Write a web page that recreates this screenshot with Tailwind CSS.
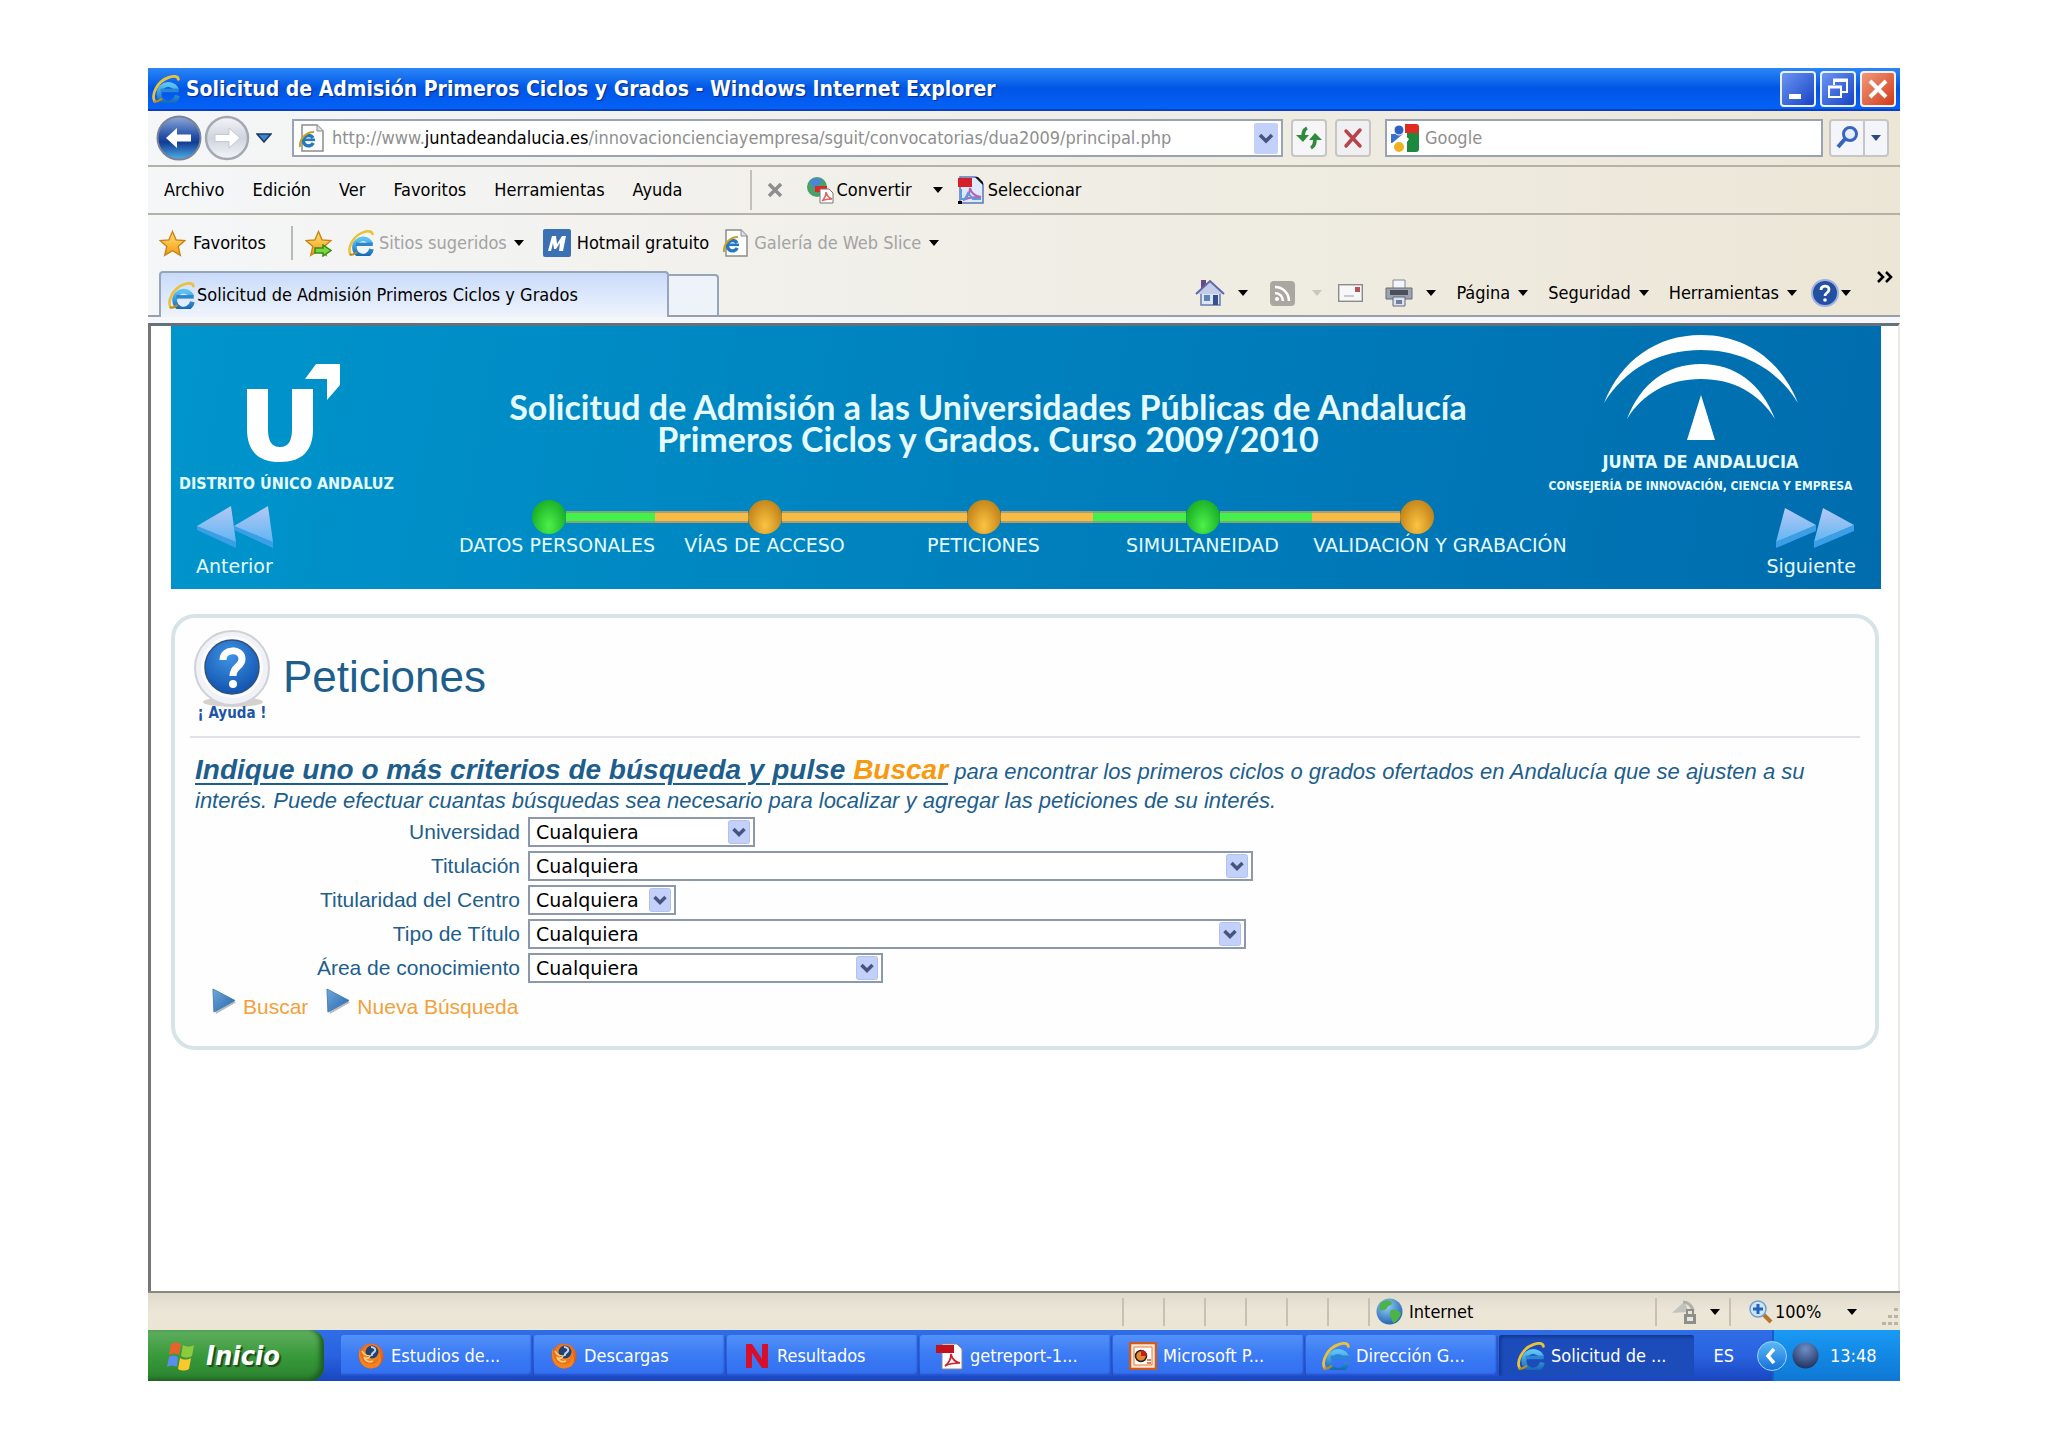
<!DOCTYPE html>
<html lang="es">
<head>
<meta charset="utf-8">
<meta name="viewport" content="width=device-width, initial-scale=1">
<title>Solicitud de Admisión Primeros Ciclos y Grados</title>
<script src="https://cdn.jsdelivr.net/npm/@tailwindcss/browser@4"></script>
</head>
<body class="min-h-screen flex flex-col bg-white px-[148px] pt-[68px] pb-[66px] font-['DejaVu_Sans_Condensed','DejaVu_Sans',sans-serif] text-[18px] leading-6 text-black">

<svg class="absolute size-0" aria-hidden="true">
  <defs>
    <linearGradient id="gIe" x1="0" y1="0" x2="0" y2="1"><stop offset="0" stop-color="#5ec3f2"/><stop offset="1" stop-color="#1467b8"/></linearGradient>
    <linearGradient id="gStar" x1="0" y1="0" x2="0" y2="1"><stop offset="0" stop-color="#ffe27a"/><stop offset="1" stop-color="#f39a12"/></linearGradient>
    <linearGradient id="gBack" x1="0" y1="0" x2="0" y2="1"><stop offset="0" stop-color="#8fa9d8"/><stop offset=".45" stop-color="#2752a8"/><stop offset=".6" stop-color="#123c94"/><stop offset="1" stop-color="#4fb0ea"/></linearGradient>
    <linearGradient id="gFwd" x1="0" y1="0" x2="0" y2="1"><stop offset="0" stop-color="#f4f5f8"/><stop offset=".5" stop-color="#cfd4de"/><stop offset="1" stop-color="#f3f5f8"/></linearGradient>
    <linearGradient id="gNav" x1="0" y1="0" x2="0" y2="1"><stop offset="0" stop-color="#b4c8f6"/><stop offset="1" stop-color="#62b6f2"/></linearGradient>
    <linearGradient id="gPlay" x1="0" y1="0" x2="1" y2="1"><stop offset="0" stop-color="#6fa8dc"/><stop offset="1" stop-color="#2465ab"/></linearGradient>
    <radialGradient id="gHelp" cx=".45" cy=".3" r=".8"><stop offset="0" stop-color="#3f93e4"/><stop offset="1" stop-color="#0a4aa6"/></radialGradient>
    <radialGradient id="gGlobe" cx=".4" cy=".3" r=".8"><stop offset="0" stop-color="#8fd0f5"/><stop offset="1" stop-color="#1b55a8"/></radialGradient>
    <radialGradient id="gFox" cx=".5" cy=".4" r=".6"><stop offset="0" stop-color="#ffb23c"/><stop offset="1" stop-color="#d9480f"/></radialGradient>
    <radialGradient id="gBall" cx=".5" cy=".25" r=".8"><stop offset="0" stop-color="#6f8fc8"/><stop offset="1" stop-color="#1c2c58"/></radialGradient>
  </defs>
  <symbol id="ie" viewBox="0 0 26 26">
    <path d="M23.500 19A8.600 8.600 0 1 1 22.900 14" fill="none" stroke="url(#gIe)" stroke-width="4.600"/>
    <path d="M8 12.600h16.800v3.400H8z" fill="#2b86d4"/>
    <path d="M2.500 24.500C-1 18 5 6 15 2.400C20 .5 24 1 24.500 4" fill="none" stroke="#e9c23c" stroke-width="2.600" stroke-linecap="round"/>
    <path d="M2.500 24.500c2 1 4-.5 6-2" fill="none" stroke="#b98d1c" stroke-width="2" stroke-linecap="round"/>
  </symbol>
  <symbol id="iepage" viewBox="0 0 26 28">
    <path d="M4 1h15l6 6v20H4z" fill="#fdfdfd" stroke="#8c8c8c" stroke-width="1.500"/>
    <path d="M19 1v6h6" fill="#ddd" stroke="#8c8c8c"/>
    <path d="M15.200 19A5.200 5.200 0 1 1 15 14" fill="none" stroke="#2677bd" stroke-width="3.400"/>
    <path d="M6 14.500h11v2.600H6z" fill="#2677bd"/>
    <path d="M2 23C1 16 7 8 16 8" fill="none" stroke="#c9a227" stroke-width="2"/>
  </symbol>
  <symbol id="star" viewBox="0 0 26 26">
    <path d="M13 1.500l3.400 8 8.600.7-6.500 5.700 2 8.500L13 19.900l-7.500 4.500 2-8.500L1 10.200l8.600-.7z" fill="url(#gStar)" stroke="#c98212" stroke-width="1.300"/>
  </symbol>
  <symbol id="drop" viewBox="0 0 10 6"><path d="M0 0h10L5 6z" fill="currentColor"/></symbol>
  <symbol id="fox" viewBox="0 0 28 28">
    <circle cx="14" cy="14" r="12.500" fill="url(#gFox)"/>
    <circle cx="15" cy="10" r="6.500" fill="#24406f"/>
    <path d="M14 5c3 0 5 2 4 4s-4 2-3 5" fill="none" stroke="#b9d6f2" stroke-width="2"/>
    <path d="M3 6c0 10 3 16 11 16 7 0 9-6 7-11 5 4 5 15-7 15.500C4 26 0 16 3 6z" fill="#f58220"/>
    <path d="M5 9c2 4 5 5 8 5-1 3-5 3-6 1 1 4 5 6 9 4" fill="none" stroke="#ffd27a" stroke-width="1.600"/>
  </symbol>
  <symbol id="play" viewBox="0 0 26 28"><path d="M3 4l22 11L4 27z" fill="#b7bcc4"/><path d="M1 1l23 12L2 25z" fill="url(#gPlay)" stroke="#4d7fae"/></symbol>
  <symbol id="chev" viewBox="0 0 22 24">
    <rect x=".5" y=".5" width="21" height="23" rx="2" fill="#c3d1fa" stroke="#b0c2f2"/>
    <path d="M5.500 9l5.500 5.500L16.500 9" fill="none" stroke="#44567f" stroke-width="3.500"/>
  </symbol>
</svg>

<!-- Title bar -->
<header class="flex h-[43px] items-center gap-[6px] bg-linear-to-b from-[#2b86f8] via-[#0055e5] to-[#0562f8] pl-1 pr-1 border-b-2 border-[#0a3fc0]">
  <svg class="size-[28px] shrink-0"><use href="#ie"/></svg>
  <h1 class="flex-1 truncate text-[21px] font-bold text-white [text-shadow:1px_1px_1px_#0a2a80]">Solicitud de Admisión Primeros Ciclos y Grados - Windows Internet Explorer</h1>
  <div class="flex gap-1">
    <button aria-label="Minimizar" class="size-[36px] rounded-[4px] border-2 border-white/90 bg-linear-to-br from-[#6c94f0] to-[#1941c6]"><svg viewBox="0 0 32 32"><path d="M7 21h12v5H7z" fill="#fff"/></svg></button>
    <button aria-label="Restaurar" class="size-[36px] rounded-[4px] border-2 border-white/90 bg-linear-to-br from-[#6c94f0] to-[#1941c6]"><svg viewBox="0 0 32 32" fill="none" stroke="#fff" stroke-width="2"><path d="M12 12V8h13v11h-5"/><path d="M11 7h15" stroke-width="3"/><path d="M7 14h12v10H7z"/><path d="M6 14h14" stroke-width="3"/></svg></button>
    <button aria-label="Cerrar" class="size-[36px] rounded-[4px] border-2 border-white/90 bg-linear-to-br from-[#f09878] to-[#cf3510]"><svg viewBox="0 0 32 32"><path d="M8 8l16 16M24 8L8 24" stroke="#fff" stroke-width="4"/></svg></button>
  </div>
</header>

<!-- Toolbars -->
<div class="bg-linear-to-r from-[#f5f6f8] via-[#f0eee6] to-[#ece6d6]">
  <div class="flex h-[56px] items-center border-b-2 border-[#b3b1a8] pl-2 pr-[11px]">
    <button aria-label="Atrás"><svg class="h-[46px] w-[46px]" viewBox="0 0 46 46"><circle cx="23" cy="23" r="21.500" fill="url(#gBack)" stroke="#7b8296" stroke-width="2"/><path d="M10 23l11-10v6.500h14v7H21V33z" fill="#fff"/></svg></button>
    <button aria-label="Adelante" class="ml-[2px]"><svg class="h-[46px] w-[46px]" viewBox="0 0 46 46"><circle cx="23" cy="23" r="21" fill="url(#gFwd)" stroke="#a4a8b2" stroke-width="2.500"/><path d="M36 23L25 13v6.500H11v7h14V33z" fill="#fff" stroke="#c5c9d2"/></svg></button>
    <button aria-label="Páginas recientes" class="ml-[4px] w-[20px]"><svg class="mx-auto h-[10px] w-[16px]" viewBox="0 0 16 10"><path d="M1 1h14L8 9z" fill="#3f86c8" stroke="#17396b" stroke-width="1.500"/></svg></button>
    <div class="ml-[18px] flex h-[38px] flex-1 items-center border-2 border-[#9aa3b5] bg-white pl-1 pr-[3px]">
      <svg class="h-[28px] w-[26px] shrink-0"><use href="#iepage"/></svg>
      <div role="textbox" aria-label="Dirección" contenteditable="true" class="ml-[8px] flex-1 truncate text-[#8f8f8f]">http://www.<span class="text-black">juntadeandalucia.es</span>/innovacioncienciayempresa/sguit/convocatorias/dua2009/principal.php</div>
      <button aria-label="Mostrar direcciones"><svg class="h-[31px] w-[24px]" viewBox="0 0 24 31"><rect width="24" height="31" rx="2" fill="#c3d1fa"/><path d="M6 12l6 6 6-6" fill="none" stroke="#44567f" stroke-width="3.500"/></svg></button>
    </div>
    <button aria-label="Actualizar" class="ml-[8px] h-[38px] w-[36px] rounded-[4px] border-2 border-[#c6c6c4] bg-[#f6f6f8]"><svg viewBox="0 0 32 34" fill="none" stroke="#2e8b3d" stroke-width="3.500"><path d="M14 7c-4 2-4 6-4 10"/><path d="M3 14h13l-6 7z" fill="#2e8b3d" stroke="none"/><path d="M18 27c4-2 4-6 4-10"/><path d="M16 19h13l-7-7z" fill="#2e8b3d" stroke="none"/></svg></button>
    <button aria-label="Detener" class="ml-[8px] h-[38px] w-[36px] rounded-[4px] border-2 border-[#c6c6c4] bg-[#f0f0f2]"><svg viewBox="0 0 32 34"><path d="M9 10l14 15M23 9L9 25" stroke="#b5444b" stroke-width="3.500" stroke-linecap="round"/></svg></button>
    <div class="ml-[14px] flex h-[38px] w-[438px] items-center border-2 border-[#9aa3b5] bg-white pl-1">
      <svg class="h-[28px] w-[28px] shrink-0" viewBox="0 0 28 28"><path d="M14 0h11a3 3 0 013 3v6H14z" fill="#e02b20"/><path d="M16 9h12v16a3 3 0 01-3 3H16z" fill="#1c8a3e"/><path d="M0 10h12v9H0z" fill="#3b6fd0"/><circle cx="8" cy="6" r="5" fill="#2d62bf" stroke="#fff"/><path d="M0 20l12-10 6 5-4 6z" fill="#fff"/><circle cx="8" cy="23" r="5" fill="#f1b022"/></svg>
      <input aria-label="Buscar" placeholder="Google" class="ml-[6px] w-full bg-transparent outline-none placeholder:text-[#8f8f8f]">
    </div>
    <div class="ml-[6px] flex h-[38px] rounded-[4px] border-2 border-[#c6c6c4] bg-[#f4f5fa]">
      <button aria-label="Ir" class="w-[34px] border-r-2 border-[#c6c6c4]"><svg viewBox="0 0 32 34" fill="none"><circle cx="19" cy="13" r="6.500" stroke="#3a63c0" stroke-width="3" fill="#e4eefc"/><path d="M14 18l-7 8" stroke="#3a63c0" stroke-width="4"/></svg></button>
      <button aria-label="Opciones de búsqueda" class="w-[22px] text-[#2c4a82]"><svg class="mx-auto h-[6px] w-[10px]"><use href="#drop"/></svg></button>
    </div>
  </div>

  <nav class="flex h-[48px] items-center border-b-2 border-[#b3b1a8] pl-4">
    <div class="flex gap-[28px]">
      <a href="#">Archivo</a><a href="#">Edición</a><a href="#">Ver</a><a href="#">Favoritos</a><a href="#">Herramientas</a><a href="#">Ayuda</a>
    </div>
    <div class="ml-[67px] h-[40px] w-[2px] bg-[#c2c0b8]"></div>
    <button aria-label="Cerrar barra" class="ml-[14px]"><svg class="size-[18px]" viewBox="0 0 18 18"><path d="M3 3l12 12M15 3L3 15" stroke="#8e8e8e" stroke-width="3.500"/></svg></button>
    <button class="ml-[22px] flex items-center gap-[3px]"><svg class="size-[28px]" viewBox="0 0 28 28"><circle cx="11" cy="11" r="10" fill="#4aa06a"/><path d="M4 5c4-4 10-3 13 0-3 3-5 2-6 6-3 2-6-1-7-6z" fill="#4b86d8"/><path d="M9 10h12v6H9z" fill="#e02626"/><path d="M14 13h9l4 4v10H14z" fill="#fff" stroke="#777"/><path d="M16 25c3-3 4-6 4-9 1 4 3 6 6 7-4 0-7 0-10 2z" fill="none" stroke="#d66" stroke-width="1.500"/></svg>Convertir</button>
    <button aria-label="Opciones de Convertir" class="ml-[21px]"><svg class="h-[6px] w-[10px]"><use href="#drop"/></svg></button>
    <button class="ml-[14px] flex items-center gap-[3px]"><svg class="size-[28px]" viewBox="0 0 28 28"><path d="M3 1h16l7 7v19H3z" fill="#dfe9fb" stroke="#5b78b8" stroke-width="1.500"/><path d="M18 1l8 8v-3l-5-5z" fill="#111"/><path d="M1 2h14v9H1z" fill="#d5202a"/><path d="M6 24c5-3 7-7 7-12 1 5 5 8 11 9-6 0-12 0-18 3z" fill="none" stroke="#b565b5" stroke-width="2"/><path d="M4 13v10h4l3-6 5 6h8" fill="none" stroke="#5b9be0" stroke-width="2"/><path d="M1 25h4v3H1z"/></svg>Seleccionar</button>
  </nav>

  <nav class="flex h-[56px] items-center pl-[11px]">
    <button class="flex items-center gap-[7px]"><svg class="size-[27px]"><use href="#star"/></svg>Favoritos</button>
    <div class="ml-[25px] h-[34px] w-[2px] bg-[#b9b9b5]"></div>
    <button aria-label="Agregar a favoritos" class="relative ml-[12px]"><svg class="size-[27px]"><use href="#star"/></svg><svg class="absolute right-0 bottom-0 h-[13px] w-[18px]" viewBox="0 0 18 13"><path d="M1 4h8V1l8 5.500-8 5.500V9H1z" fill="#7fd63c" stroke="#2f8f1c" stroke-width="1.500"/></svg></button>
    <a href="#" class="ml-[16px] flex items-center gap-[5px] text-[#a3a3a3]"><svg class="size-[26px]"><use href="#ie"/></svg>Sitios sugeridos<svg class="ml-[2px] h-[6px] w-[10px] text-black"><use href="#drop"/></svg></a>
    <a href="#" class="ml-[19px] flex items-center gap-[6px]"><svg class="size-[28px]" viewBox="0 0 28 28"><rect width="28" height="28" rx="2" fill="#3c70b4"/><path d="M5 22L9 7h4l1 8 5-8h4l-3 15h-4l1-8-4 6h-2l-1-6-2 8z" fill="#fff"/></svg>Hotmail gratuito</a>
    <a href="#" class="ml-[13px] flex items-center gap-[6px] text-[#a3a3a3]"><svg class="h-[28px] w-[26px]"><use href="#iepage"/></svg>Galería de Web Slice<svg class="ml-[2px] h-[6px] w-[10px] text-black"><use href="#drop"/></svg></a>
  </nav>

  <div class="flex h-[46px] items-end border-b-2 border-[#9a9eaa] pl-[11px]">
    <a href="#" class="-mb-[2px] flex h-[46px] w-[510px] items-center gap-[2px] rounded-t-[4px] border-2 border-b-0 border-[#97a5b8] bg-linear-to-b from-[#c9dbfa] to-[#eff4fc] px-[7px]"><svg class="size-[27px] shrink-0"><use href="#ie"/></svg><span class="truncate">Solicitud de Admisión Primeros Ciclos y Grados</span></a>
    <button aria-label="Nueva pestaña" class="h-[41px] w-[50px] rounded-tr-[4px] border-2 border-b-0 border-l-0 border-[#97a5b8] bg-[#eef3fa]"></button>
    <div class="ml-auto flex h-full items-center self-start pr-[7px]">
      <button aria-label="Página principal"><svg class="h-[30px] w-[30px]" viewBox="0 0 30 30"><path d="M6 2h5v8H6z" fill="#6a4a86"/><path d="M6 14h19v13H6z" fill="#dbe6f8" stroke="#6b7ba8" stroke-width="1.500"/><path d="M1 16L15 3l14 13" fill="#c3cdea" stroke="#5d6aa6" stroke-width="2"/><path d="M9 17h6v6H9z" fill="#5f83b8"/><path d="M18 17h5v10h-5z" fill="#35508c"/></svg></button>
      <svg class="ml-[13px] h-[6px] w-[10px]"><use href="#drop"/></svg>
      <button aria-label="Fuentes" class="ml-[22px]"><svg class="size-[25px]" viewBox="0 0 25 25"><rect width="25" height="25" rx="4" fill="#a9a79f"/><g fill="none" stroke="#fff" stroke-width="2.500"><path d="M5 12a8 8 0 018 8M5 6a14 14 0 0114 14"/></g><circle cx="7" cy="18" r="2" fill="#fff"/></svg></button>
      <svg class="ml-[17px] h-[6px] w-[10px] text-[#c9c6bc]"><use href="#drop"/></svg>
      <button aria-label="Leer correo" class="ml-[16px]"><svg class="h-[18px] w-[25px]" viewBox="0 0 25 18"><rect x=".7" y=".7" width="23.600" height="16.600" fill="#f7f7f7" stroke="#8b8b8b" stroke-width="1.400"/><path d="M17 3h5v5h-5z" fill="#b4545a"/><path d="M6 12h10" stroke="#bbb" stroke-width="1.500"/></svg></button>
      <button aria-label="Imprimir" class="ml-[21px]"><svg class="h-[28px] w-[30px]" viewBox="0 0 30 28"><path d="M9 1h12v9H9z" fill="#f2f5fa" stroke="#889"/><path d="M2 9h26v11H2z" fill="#9ea4ae" stroke="#666c78"/><path d="M6 11h18v5H6z" fill="#4b505c"/><path d="M9 18h12v9H9z" fill="#dde3ee" stroke="#667"/><path d="M12 21h6v4h-6z" fill="#6f7fa0"/></svg></button>
      <svg class="ml-[12px] h-[6px] w-[10px]"><use href="#drop"/></svg>
      <button class="ml-[20px] flex items-center gap-[8px]">Página<svg class="h-[6px] w-[10px]"><use href="#drop"/></svg></button>
      <button class="ml-[20px] flex items-center gap-[8px]">Seguridad<svg class="h-[6px] w-[10px]"><use href="#drop"/></svg></button>
      <button class="ml-[20px] flex items-center gap-[8px]">Herramientas<svg class="h-[6px] w-[10px]"><use href="#drop"/></svg></button>
      <button aria-label="Ayuda" class="ml-[14px] flex items-center gap-[2px]"><svg class="size-[28px]" viewBox="0 0 28 28"><circle cx="14" cy="14" r="13" fill="#2450a4" stroke="#9fb2dc" stroke-width="2"/><path d="M10 11c0-5 8-5 8-.5 0 3.500-4 3-4 6.500" fill="none" stroke="#fff" stroke-width="2.800"/><circle cx="14" cy="21" r="1.800" fill="#fff"/></svg><svg class="h-[6px] w-[10px]"><use href="#drop"/></svg></button>
      <button aria-label="Más" class="ml-[26px] self-start"><svg class="h-[12px] w-[16px]" viewBox="0 0 16 12"><path d="M1 1l5 5-5 5M9 1l5 5-5 5" fill="none" stroke="#000" stroke-width="2.600"/></svg></button>
    </div>
  </div>
  <div class="h-[6px] bg-[#f6f7fa]"></div>
</div>

<!-- Web page -->
<main class="flex-1 border-t-3 border-l-3 border-r-2 border-t-[#64707a] border-l-[#77757a] border-r-[#ece9e4] bg-white pl-5 pr-[17px]">
  <div class="flex h-[263px] flex-col bg-linear-[100deg] from-[#0095cc] via-[#0080bd] to-[#006cae] text-[#e6fbff]">
    <div class="flex h-[175px]">
      <div class="flex w-[285px] flex-col items-start">
        <svg class="mt-[38px] ml-[76px] h-[99px] w-[93px]" viewBox="0 0 93 99" fill="#fff"><path d="M0 25h21v40c0 11 3 18 12 18s12-7 12-18V25h21v40c0 22-11 33-33 33S0 87 0 65z"/><path d="M69 0h24v21L80 36V15H58z"/></svg>
        <p class="ml-2 mt-[9px] text-[16px] font-bold">DISTRITO ÚNICO ANDALUZ</p>
      </div>
      <h2 class="flex-1 pt-[65px] text-center font-['Lato',sans-serif] text-[34px] leading-8 font-bold whitespace-nowrap">Solicitud de Admisión a las Universidades Públicas de Andalucía<br>Primeros Ciclos y Grados. Curso 2009/2010</h2>
      <div class="flex w-[361px] flex-col items-center">
        <svg class="mt-[9px] h-[106px] w-[196px]" viewBox="0 0 196 106" fill="#fff"><path d="M1 68C18 25 54 0 98 0s80 25 97 68C174 34 140 15 98 15S22 34 1 68z"/><path d="M24 84C38 48 64 29 98 29s60 19 74 55C156 58 130 44 98 44S40 58 24 84z"/><path d="M98 60l14 45H84z"/></svg>
        <p class="mt-[9px] text-[18px] leading-6 font-bold">JUNTA DE ANDALUCIA</p>
        <p class="text-[12px] leading-6 font-bold">CONSEJERÍA DE INNOVACIÓN, CIENCIA Y EMPRESA</p>
      </div>
    </div>
    <div class="flex flex-1 font-['DejaVu_Sans',sans-serif] text-[19px] leading-6">
      <div class="w-[269px] pl-[25px]">
        <a href="#" class="inline-flex flex-col"><svg class="mt-[4px] h-[44px] w-[82px]" viewBox="0 0 82 44"><g id="rw"><path d="M1 21l39 16v6L1 25z" fill="#3a9fe6"/><path d="M1 21L35 1l5 36z" fill="url(#gNav)"/></g><use href="#rw" x="37"/></svg><span class="mt-[5px]">Anterior</span></a>
      </div>
      <ol class="grid grid-cols-[215px_219px_219px_219px_256px] whitespace-nowrap">
        <li class="flex flex-col">
          <div class="flex h-[32px] items-center"><span class="w-[92px]"></span><span class="size-[34px] rounded-full bg-radial-[at_50%_75%] from-[#4df04a] to-[#0a9a1c]"></span><span class="h-[12px] flex-1 border-y-2 border-[#7ea876] bg-[#45f04a]"></span></div>
          <span class="text-right">DATOS PERSONALES</span>
        </li>
        <li class="flex flex-col">
          <div class="flex h-[32px] items-center"><span class="h-[12px] flex-1 border-y-2 border-[#b79a6c] bg-[#f4bd48]"></span><span class="size-[34px] rounded-full bg-radial-[at_50%_75%] from-[#fcc343] to-[#b0700c]"></span><span class="h-[12px] flex-1 border-y-2 border-[#b79a6c] bg-[#f4bd48]"></span></div>
          <span class="text-center">VÍAS DE ACCESO</span>
        </li>
        <li class="flex flex-col">
          <div class="flex h-[32px] items-center"><span class="h-[12px] flex-1 border-y-2 border-[#b79a6c] bg-[#f4bd48]"></span><span class="size-[34px] rounded-full bg-radial-[at_50%_75%] from-[#fcc343] to-[#b0700c]"></span><span class="h-[12px] flex-1 border-y-2 border-[#b79a6c] bg-[#f4bd48]"></span></div>
          <span class="text-center">PETICIONES</span>
        </li>
        <li class="flex flex-col">
          <div class="flex h-[32px] items-center"><span class="h-[12px] flex-1 border-y-2 border-[#7ea876] bg-[#45f04a]"></span><span class="size-[34px] rounded-full bg-radial-[at_50%_75%] from-[#4df04a] to-[#0a9a1c]"></span><span class="h-[12px] flex-1 border-y-2 border-[#7ea876] bg-[#45f04a]"></span></div>
          <span class="text-center">SIMULTANEIDAD</span>
        </li>
        <li class="flex flex-col">
          <div class="flex h-[32px] items-center"><span class="h-[12px] w-[88px] border-y-2 border-[#b79a6c] bg-[#f4bd48]"></span><span class="size-[34px] rounded-full bg-radial-[at_50%_75%] from-[#fcc343] to-[#b0700c]"></span></div>
          <span class="text-center">VALIDACIÓN Y GRABACIÓN</span>
        </li>
      </ol>
      <div class="ml-auto pr-[25px]">
        <a href="#" class="inline-flex flex-col items-end"><svg class="mt-[6px] h-[42px] w-[81px]" viewBox="0 0 81 42"><g id="ff"><path d="M1 35l40-17v6L1 41z" fill="#3a9fe6"/><path d="M41 18L10 1 1 35z" fill="url(#gNav)"/></g><use href="#ff" x="38"/></svg><span class="mt-[5px]">Siguiente</span></a>
      </div>
    </div>
  </div>

  <section class="mt-[25px] mr-[2px] rounded-[24px] border-4 border-[#d6e4e8] bg-[#fefefe] px-[15px] text-[#1d5e8d] font-['Liberation_Sans',sans-serif]">
    <div class="flex h-[120px] border-b-2 border-[#dfe3e9] pt-[12px]">
      <a href="#" class="flex w-[84px] flex-col items-center"><svg class="size-[78px] shrink-0" viewBox="0 0 78 78"><ellipse cx="40" cy="72" rx="30" ry="5" fill="#d6d0cc"/><circle cx="39" cy="38" r="37" fill="#f1f2f6" stroke="#cfd1d8" stroke-width="2"/><circle cx="39" cy="37" r="31" fill="#fafbfd"/><circle cx="39" cy="37" r="27" fill="url(#gHelp)" stroke="#33507e" stroke-width="1.500"/><path d="M30 30c0-12 19-12 19-1 0 8-9 7-9 17" fill="none" stroke="#fff" stroke-width="7"/><circle cx="40" cy="54" r="4" fill="#fff"/></svg><span class="-mt-[5px] font-['DejaVu_Sans_Condensed',sans-serif] text-[15px] leading-5 font-bold text-[#1c55a4]">¡ Ayuda !</span></a>
      <h3 class="ml-[9px] pt-[21px] text-[44px] leading-[52px]">Peticiones</h3>
    </div>
    <p class="mt-[17px] pl-[5px] text-[22px] leading-[29px] italic"><strong class="text-[28px] underline decoration-2 underline-offset-4">Indique uno o más criterios de búsqueda y pulse <span class="text-[#f79a10]">Buscar</span></strong> para encontrar los primeros ciclos o grados ofertados en Andalucía que se ajusten a su interés. Puede efectuar cuantas búsquedas sea necesario para localizar y agregar las peticiones de su interés.</p>
    <form class="mt-[2px] pb-[24px]">
      <div class="grid grid-cols-[330px_1fr] items-center gap-x-[8px] gap-y-1 text-right text-[21px] leading-[30px]">
        <label for="uni">Universidad</label>
        <div class="relative w-[227px]"><select id="uni" class="block h-[30px] w-full appearance-none border-2 border-[#8d99ab] bg-white pl-[6px] font-['DejaVu_Sans',sans-serif] text-[19px] leading-6 text-black"><option>Cualquiera</option></select><svg class="pointer-events-none absolute top-[3px] right-[4px] h-[24px] w-[24px]"><use href="#chev"/></svg></div>
        <label for="tit">Titulación</label>
        <div class="relative w-[725px]"><select id="tit" class="block h-[30px] w-full appearance-none border-2 border-[#8d99ab] bg-white pl-[6px] font-['DejaVu_Sans',sans-serif] text-[19px] leading-6 text-black"><option>Cualquiera</option></select><svg class="pointer-events-none absolute top-[3px] right-[4px] h-[24px] w-[24px]"><use href="#chev"/></svg></div>
        <label for="cen">Titularidad del Centro</label>
        <div class="relative w-[148px]"><select id="cen" class="block h-[30px] w-full appearance-none border-2 border-[#8d99ab] bg-white pl-[6px] font-['DejaVu_Sans',sans-serif] text-[19px] leading-6 text-black"><option>Cualquiera</option></select><svg class="pointer-events-none absolute top-[3px] right-[4px] h-[24px] w-[24px]"><use href="#chev"/></svg></div>
        <label for="tipo">Tipo de Título</label>
        <div class="relative w-[718px]"><select id="tipo" class="block h-[30px] w-full appearance-none border-2 border-[#8d99ab] bg-white pl-[6px] font-['DejaVu_Sans',sans-serif] text-[19px] leading-6 text-black"><option>Cualquiera</option></select><svg class="pointer-events-none absolute top-[3px] right-[4px] h-[24px] w-[24px]"><use href="#chev"/></svg></div>
        <label for="area">Área de conocimiento</label>
        <div class="relative w-[355px]"><select id="area" class="block h-[30px] w-full appearance-none border-2 border-[#8d99ab] bg-white pl-[6px] font-['DejaVu_Sans',sans-serif] text-[19px] leading-6 text-black"><option>Cualquiera</option></select><svg class="pointer-events-none absolute top-[3px] right-[4px] h-[24px] w-[24px]"><use href="#chev"/></svg></div>
      </div>
      <div class="mt-[5px] flex gap-[18px] pl-[22px] text-[21px] leading-[30px] text-[#f2a13a]">
        <button type="submit" class="flex gap-[6px]"><svg class="h-[27px] w-[25px]"><use href="#play"/></svg><span class="pt-[4px]">Buscar</span></button>
        <button type="reset" class="flex gap-[6px]"><svg class="h-[27px] w-[25px]"><use href="#play"/></svg><span class="pt-[4px]">Nueva Búsqueda</span></button>
      </div>
    </form>
  </section>
</main>

<!-- Status bar -->
<div class="flex h-[39px] items-center border-t-2 border-[#8a887e] bg-linear-to-b from-[#dedacb] via-[#ece6d8] to-[#ebe5d4]">
  <div class="ml-auto flex h-[28px]">
    <span class="w-[41px] border-l-2 border-[#c5c2b4]"></span><span class="w-[41px] border-l-2 border-[#c5c2b4]"></span><span class="w-[41px] border-l-2 border-[#c5c2b4]"></span><span class="w-[41px] border-l-2 border-[#c5c2b4]"></span><span class="w-[41px] border-l-2 border-[#c5c2b4]"></span><span class="w-[41px] border-l-2 border-[#c5c2b4]"></span>
    <div class="flex w-[287px] items-center gap-[6px] border-l-2 border-[#c5c2b4] pl-[6px]"><svg class="size-[27px]" viewBox="0 0 27 27"><circle cx="13.500" cy="13.500" r="13" fill="url(#gGlobe)"/><path d="M5 5c5-4 9-3 11 0-1 3-4 2-5 5-2 3-6 3-8 1 0-2 1-4 2-6zM15 12c4-1 8 0 10 3-1 5-4 9-8 10-1-4-5-8-2-13z" fill="#4db24a"/></svg>Internet</div>
    <div class="flex w-[74px] items-center gap-[12px] border-l-2 border-[#c5c2b4] pl-[14px]"><svg class="h-[26px] w-[27px]" viewBox="0 0 27 26"><path d="M1 14L14 2l3 11z" fill="#c3c3bd"/><path d="M12 3a10 10 0 0110 9" fill="none" stroke="#b0b0aa" stroke-width="3"/><path d="M13 15h12v10H13z" fill="#8f8f8a"/><path d="M16 15v-4h6v4" fill="none" stroke="#8f8f8a" stroke-width="2"/><path d="M16 18h6v4h-6z" fill="#e8e8e2"/></svg><svg class="h-[6px] w-[10px]"><use href="#drop"/></svg></div>
    <button class="flex w-[171px] items-center border-l-2 border-[#c5c2b4] pl-[18px]"><svg class="h-[24px] w-[24px]" viewBox="0 0 24 24"><path d="M14 14l8 8" stroke="#b7742c" stroke-width="4"/><circle cx="9" cy="9" r="8" fill="#cfe4fa" stroke="#6f9fd0" stroke-width="1.500"/><path d="M9 4v10M4 9h10" stroke="#1f62c0" stroke-width="3"/></svg><span class="ml-[2px]">100%</span><svg class="ml-[26px] h-[6px] w-[10px]"><use href="#drop"/></svg><svg class="ml-auto h-[20px] w-[18px] self-end" viewBox="0 0 18 20" fill="#b9b5a4"><path d="M12 2h4v3h-4zM12 9h4v3h-4zM6 9h4v3H6zM12 16h4v3h-4zM6 16h4v3H6zM0 16h4v3H0z"/></svg></button>
  </div>
</div>

<!-- Taskbar -->
<footer class="flex h-[51px] items-stretch bg-linear-to-b from-[#2f6ee6] via-[#2a62e0] to-[#1a46c0] text-white">
  <button class="flex w-[176px] shrink-0 items-center gap-[9px] rounded-r-[14px] bg-linear-to-b from-[#5fae5f] via-[#389a3a] to-[#2c8230] pl-[18px] shadow-[inset_-4px_-2px_5px_#1c5c22]"><svg class="h-[30px] w-[31px]" viewBox="0 0 31 30"><path d="M5 3c3-2 6-2 10 0l-2 11c-4-2-7-2-10 0z" fill="#e8622c"/><path d="M17 4c4 2 7 2 11 0l-2 11c-4 2-7 2-11 0z" fill="#8ccb3c"/><path d="M3 16c3-2 6-2 9 0l-1 10c-4-2-7-2-10 0z" fill="#5b8df0"/><path d="M14 17c4 2 7 2 11 0l-2 11c-4 2-7 2-11 0z" fill="#f8c82c"/></svg><span class="text-[27px] leading-8 font-bold italic [text-shadow:2px_2px_1px_#1c4c1c]">Inicio</span></button>
  <div class="ml-[17px] flex gap-px py-[5px]">
    <button class="flex w-[192px] items-center gap-[6px] rounded-[3px] bg-linear-to-b from-[#5290f8] via-[#3a7af4] to-[#336ff0] pl-[16px] shadow-[inset_-2px_-2px_2px_#2450c8]"><svg class="size-[28px]"><use href="#fox"/></svg>Estudios de...</button>
    <button class="flex w-[192px] items-center gap-[6px] rounded-[3px] bg-linear-to-b from-[#5290f8] via-[#3a7af4] to-[#336ff0] pl-[16px] shadow-[inset_-2px_-2px_2px_#2450c8]"><svg class="size-[28px]"><use href="#fox"/></svg>Descargas</button>
    <button class="flex w-[192px] items-center gap-[6px] rounded-[3px] bg-linear-to-b from-[#5290f8] via-[#3a7af4] to-[#336ff0] pl-[16px] shadow-[inset_-2px_-2px_2px_#2450c8]"><svg class="size-[28px]" viewBox="0 0 28 28"><path d="M3 2h6l10 15V2h6v24h-6L9 11v15H3z" fill="#d80f2c"/></svg>Resultados</button>
    <button class="flex w-[192px] items-center gap-[6px] rounded-[3px] bg-linear-to-b from-[#5290f8] via-[#3a7af4] to-[#336ff0] pl-[16px] shadow-[inset_-2px_-2px_2px_#2450c8]"><svg class="size-[28px]" viewBox="0 0 28 28"><path d="M6 2h15l5 5v20H6z" fill="#fff" stroke="#888"/><path d="M0 3h18v8H0z" fill="#c4121c"/><path d="M9 24c4-3 6-7 6-12 1 5 4 8 9 9-5 0-10 0-15 3z" fill="none" stroke="#d0202a" stroke-width="1.700"/></svg>getreport-1...</button>
    <button class="flex w-[192px] items-center gap-[6px] rounded-[3px] bg-linear-to-b from-[#5290f8] via-[#3a7af4] to-[#336ff0] pl-[16px] shadow-[inset_-2px_-2px_2px_#2450c8]"><svg class="size-[28px]" viewBox="0 0 28 28"><path d="M1 1h26v26H1z" fill="#fbe6d4" stroke="#d2591c" stroke-width="2.500"/><path d="M5 5h18v18H5z" fill="#fff" stroke="#e07a3c"/><circle cx="12" cy="14" r="5.500" fill="#e8862e" stroke="#222" stroke-width="1.500"/><path d="M12 14V8a6 6 0 016 6z" fill="#c41e1e"/><path d="M18 18h4M18 21h4" stroke="#d2591c" stroke-width="1.500"/></svg>Microsoft P...</button>
    <button class="flex w-[192px] items-center gap-[6px] rounded-[3px] bg-linear-to-b from-[#5290f8] via-[#3a7af4] to-[#336ff0] pl-[16px] shadow-[inset_-2px_-2px_2px_#2450c8]"><svg class="size-[28px]"><use href="#ie"/></svg>Dirección G...</button>
    <button class="flex w-[195px] items-center gap-[6px] rounded-[3px] bg-[#1c4cba] pl-[18px] shadow-[inset_2px_2px_3px_#12388c]"><svg class="size-[28px]"><use href="#ie"/></svg>Solicitud de ...</button>
  </div>
  <span class="ml-auto self-center pr-[38px]">ES</span>
  <div class="relative flex w-[128px] shrink-0 items-center border-l-2 border-[#1560c8] bg-linear-to-b from-[#1a9af4] via-[#1288e4] to-[#0f78d4] pl-[18px]">
    <button aria-label="Mostrar iconos ocultos" class="absolute top-[11px] -left-[17px] size-[30px] rounded-full border border-[#9fd6fa] bg-linear-to-b from-[#5ab8f6] to-[#1470d8]"><svg viewBox="0 0 28 28"><path d="M16 7l-6 7 6 7" fill="none" stroke="#fff" stroke-width="3.500"/></svg></button>
    <svg class="size-[27px]" viewBox="0 0 27 27"><circle cx="13.500" cy="13.500" r="13" fill="url(#gBall)"/></svg>
    <time class="ml-[11px]">13:48</time>
  </div>
</footer>
</body>
</html>
